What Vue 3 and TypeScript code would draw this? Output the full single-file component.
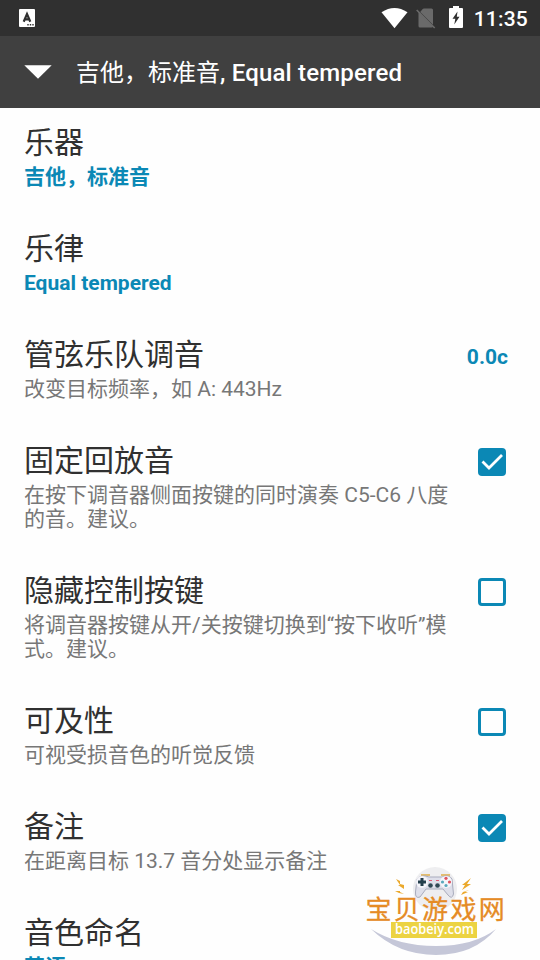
<script setup lang="ts">
interface Setting {
  title: string
  summary: string
  accent?: boolean
  value?: string
  checked?: boolean
}

const settings: Setting[] = [
  { title: '乐器', summary: '吉他，标准音', accent: true },
  { title: '乐律', summary: 'Equal tempered', accent: true },
  { title: '管弦乐队调音', summary: '改变目标频率，如 A: 443Hz', value: '0.0c' },
  { title: '固定回放音', summary: '在按下调音器侧面按键的同时演奏 C5-C6 八度\n的音。建议。', checked: true },
  { title: '隐藏控制按键', summary: '将调音器按键从开/关按键切换到“按下收听”模\n式。建议。', checked: false },
  { title: '可及性', summary: '可视受损音色的听觉反馈', checked: false },
  { title: '备注', summary: '在距离目标 13.7 音分处显示备注', checked: true },
  { title: '音色命名', summary: '英语', accent: true },
]
</script>

<template>
  <div class="screen">
    <header class="status">
      <svg class="app-icon" width="16" height="18" viewBox="0 0 16 18">
        <rect width="16" height="18" rx="1" fill="#fff" />
        <path d="M4.700 12.800 8 5l3.300 7.800M6 10.300h4" fill="none" stroke="#303030" stroke-width="2.200" />
        <path d="M8.300 15h1.400v1.500H8.300zM10.800 15h1.400v1.500h-1.400zM13.300 15h1.400v1.500h-1.400z" fill="#303030" />
      </svg>
      <div class="indicators">
        <svg width="27" height="22" viewBox="0 0 27 22">
          <path d="M.5 5.300Q13.500-3.300 26.500 5.300L13.500 21.300Z" fill="#fff" />
        </svg>
        <svg class="sim" width="20" height="22" viewBox="0 0 20 22">
          <path d="M8 1.500H15.500Q17 1.500 17 3V17.700L4.200 4.900 6.500 2.300Q7 1.500 8 1.500ZM2.500 4.800 17 19.500Q17 20.500 15.500 20.500H4Q2.500 20.500 2.500 19Z" fill="#6a6a6a" />
          <path d="M.7 3 18.700 21" stroke="#6a6a6a" stroke-width="1.600" />
        </svg>
        <svg class="battery" width="14" height="22" viewBox="0 0 14 22">
          <path d="M4 0H10V2H13Q14 2 14 3V21Q14 22 13 22H1Q0 22 0 21V3Q0 2 1 2H4Z" fill="#fff" />
          <path d="M8.500 5.500 3.500 12.700H6.300L5.300 18.500L10.500 10.700H7.800Z" fill="#303030" />
        </svg>
        <span class="clock">11:35</span>
      </div>
    </header>

    <div class="toolbar">
      <svg width="28" height="14" viewBox="0 0 28 14"><path d="M.3.3H27.700L14 13.700Z" fill="#fff" /></svg>
      <h1><span class="cjk">吉他，标准音</span><span class="latin">, Equal tempered</span></h1>
    </div>

    <main class="list">
      <section v-for="item in settings" :key="item.title" class="row">
        <div class="copy">
          <h2>{{ item.title }}</h2>
          <p :class="{ accent: item.accent }">{{ item.summary }}</p>
        </div>
        <span v-if="item.value" class="value">{{ item.value }}</span>
        <span v-if="item.checked !== undefined" class="box" :class="{ on: item.checked }">
          <svg v-if="item.checked" width="28" height="28" viewBox="0 0 28 28">
            <path d="M4.500 13.500 11 20 24 7" fill="none" stroke="#fff" stroke-width="2.800" />
          </svg>
        </span>
      </section>
    </main>

    <div class="badge">
      <svg width="170" height="105" viewBox="0 0 170 105">
        <circle cx="85" cy="34" r="22" fill="#eeeef0" />
        <path d="M21 74Q48 91 86 91T146 74Q124 100 86 100T21 74Z" fill="#c5c7d8" />
        <g fill="#eba92c">
          <path d="M46 24 50 26 50 29 54 30 54 34 48 30 50 30ZM45 36 50 36 50 37 54 39 49 38ZM121 23 117 29 121 29 112 35 115 30 112 30ZM119 35 115 37 118 37 111 40 113 37Z" />
        </g>
        <path d="M71 20h9M91 20h9" stroke="#dfad45" stroke-width="1.500" />
        <path d="M67 24Q72 19 79 22H92Q99 19 102 24L103.500 39Q102 45 98 40L93 34H76L70 42Q65 44 65.500 37Z" fill="#dedfea" stroke="#a9acbd" stroke-width="1" />
        <circle cx="72" cy="27" r="6" fill="#f5f5fa" />
        <circle cx="96" cy="27" r="6" fill="#f5f5fa" />
        <path d="M72 23v8M68 27h8" stroke="#243f4c" stroke-width="3" />
        <g fill="#df5360"><circle cx="96" cy="23.300" r="1.600" /><circle cx="99.500" cy="27" r="1.600" /></g>
        <g fill="#5aa9bd"><circle cx="92.500" cy="27" r="1.600" /><circle cx="96" cy="30.500" r="1.600" /></g>
        <path d="M79 25.500h3M86 25.500h3" stroke="#df5d78" stroke-width="1" />
        <circle cx="80.500" cy="30.500" r="2.300" fill="#304955" /><circle cx="87.500" cy="30.500" r="2.300" fill="#304955" />
        <rect x="41" y="67" width="86" height="16" fill="#ecd342" />
        <text class="domain" x="45" y="79" textLength="79" lengthAdjust="spacingAndGlyphs">baobeiy.com</text>
      </svg>
      <span class="site">宝贝游戏网</span>
    </div>
  </div>
</template>

<style>
body {
  margin: 0;
  overflow: hidden;
}
</style>

<style scoped>
.screen {
  position: relative;
  width: 540px;
  height: 960px;
  overflow: hidden;
  background: #fefefe;
  font-family: Roboto, "Noto Sans CJK SC", sans-serif;
}
.status {
  display: flex;
  box-sizing: border-box;
  height: 36px;
  padding: 0 12px 0 19px;
  align-items: center;
  justify-content: space-between;
  background: #303030;
}
.indicators {
  display: flex;
  align-items: center;
  color: #fff;
}
.indicators svg {
  margin-bottom: 1px;
}
.sim {
  margin-left: 8px;
}
.indicators .battery {
  margin: 0 11px 2px 13px;
}
.clock {
  font-size: 21px;
  font-weight: 500;
  letter-spacing: 0.2px;
  line-height: 36px;
  padding-top: 1px;
}
.toolbar {
  display: flex;
  height: 72px;
  padding-left: 24px;
  align-items: center;
  gap: 24px;
  background: #404040;
}
h1 {
  margin: 0;
  padding-top: 2px;
  font-size: 24px;
  font-weight: 500;
  line-height: 36px;
  color: #fff;
}
.cjk {
  font-weight: 400;
}
.latin {
  letter-spacing: 0.18px;
}
.list {
  display: flex;
  flex-direction: column;
  gap: 40px;
  padding: 15px 32px 0 24px;
}
.row {
  display: flex;
  justify-content: space-between;
  flex-shrink: 0;
}
h2 {
  margin: 0 0 2px;
  font-size: 30px;
  font-weight: 400;
  line-height: 40px;
  color: #303030;
}
p {
  margin: 0;
  font-size: 21px;
  line-height: 24px;
  white-space: pre;
  color: #777;
}
.accent,
.value {
  color: #0b88b5;
  font-weight: 700;
}
.value {
  margin-top: 10px;
  font-size: 21px;
  line-height: 24px;
}
.box {
  box-sizing: border-box;
  width: 28px;
  height: 28px;
  margin: 7px 2px 0 0;
  border: 3px solid #0b88b5;
  border-radius: 4px;
}
.box.on {
  border: 0;
  background: #0b88b5;
}
.box svg {
  display: block;
}
.badge {
  position: absolute;
  left: 350px;
  top: 855px;
  width: 170px;
  height: 105px;
}
.badge svg {
  display: block;
}
.site {
  position: absolute;
  left: 15.500px;
  top: 35px;
  font: 400 26px/36px "Noto Sans CJK SC", sans-serif;
  letter-spacing: 2.300px;
  white-space: nowrap;
  color: #e58b25;
  -webkit-text-stroke: 0.300px #e58b25;
}
.domain {
  font: 600 14.500px "Open Sans", sans-serif;
  fill: #fff;
}
</style>
